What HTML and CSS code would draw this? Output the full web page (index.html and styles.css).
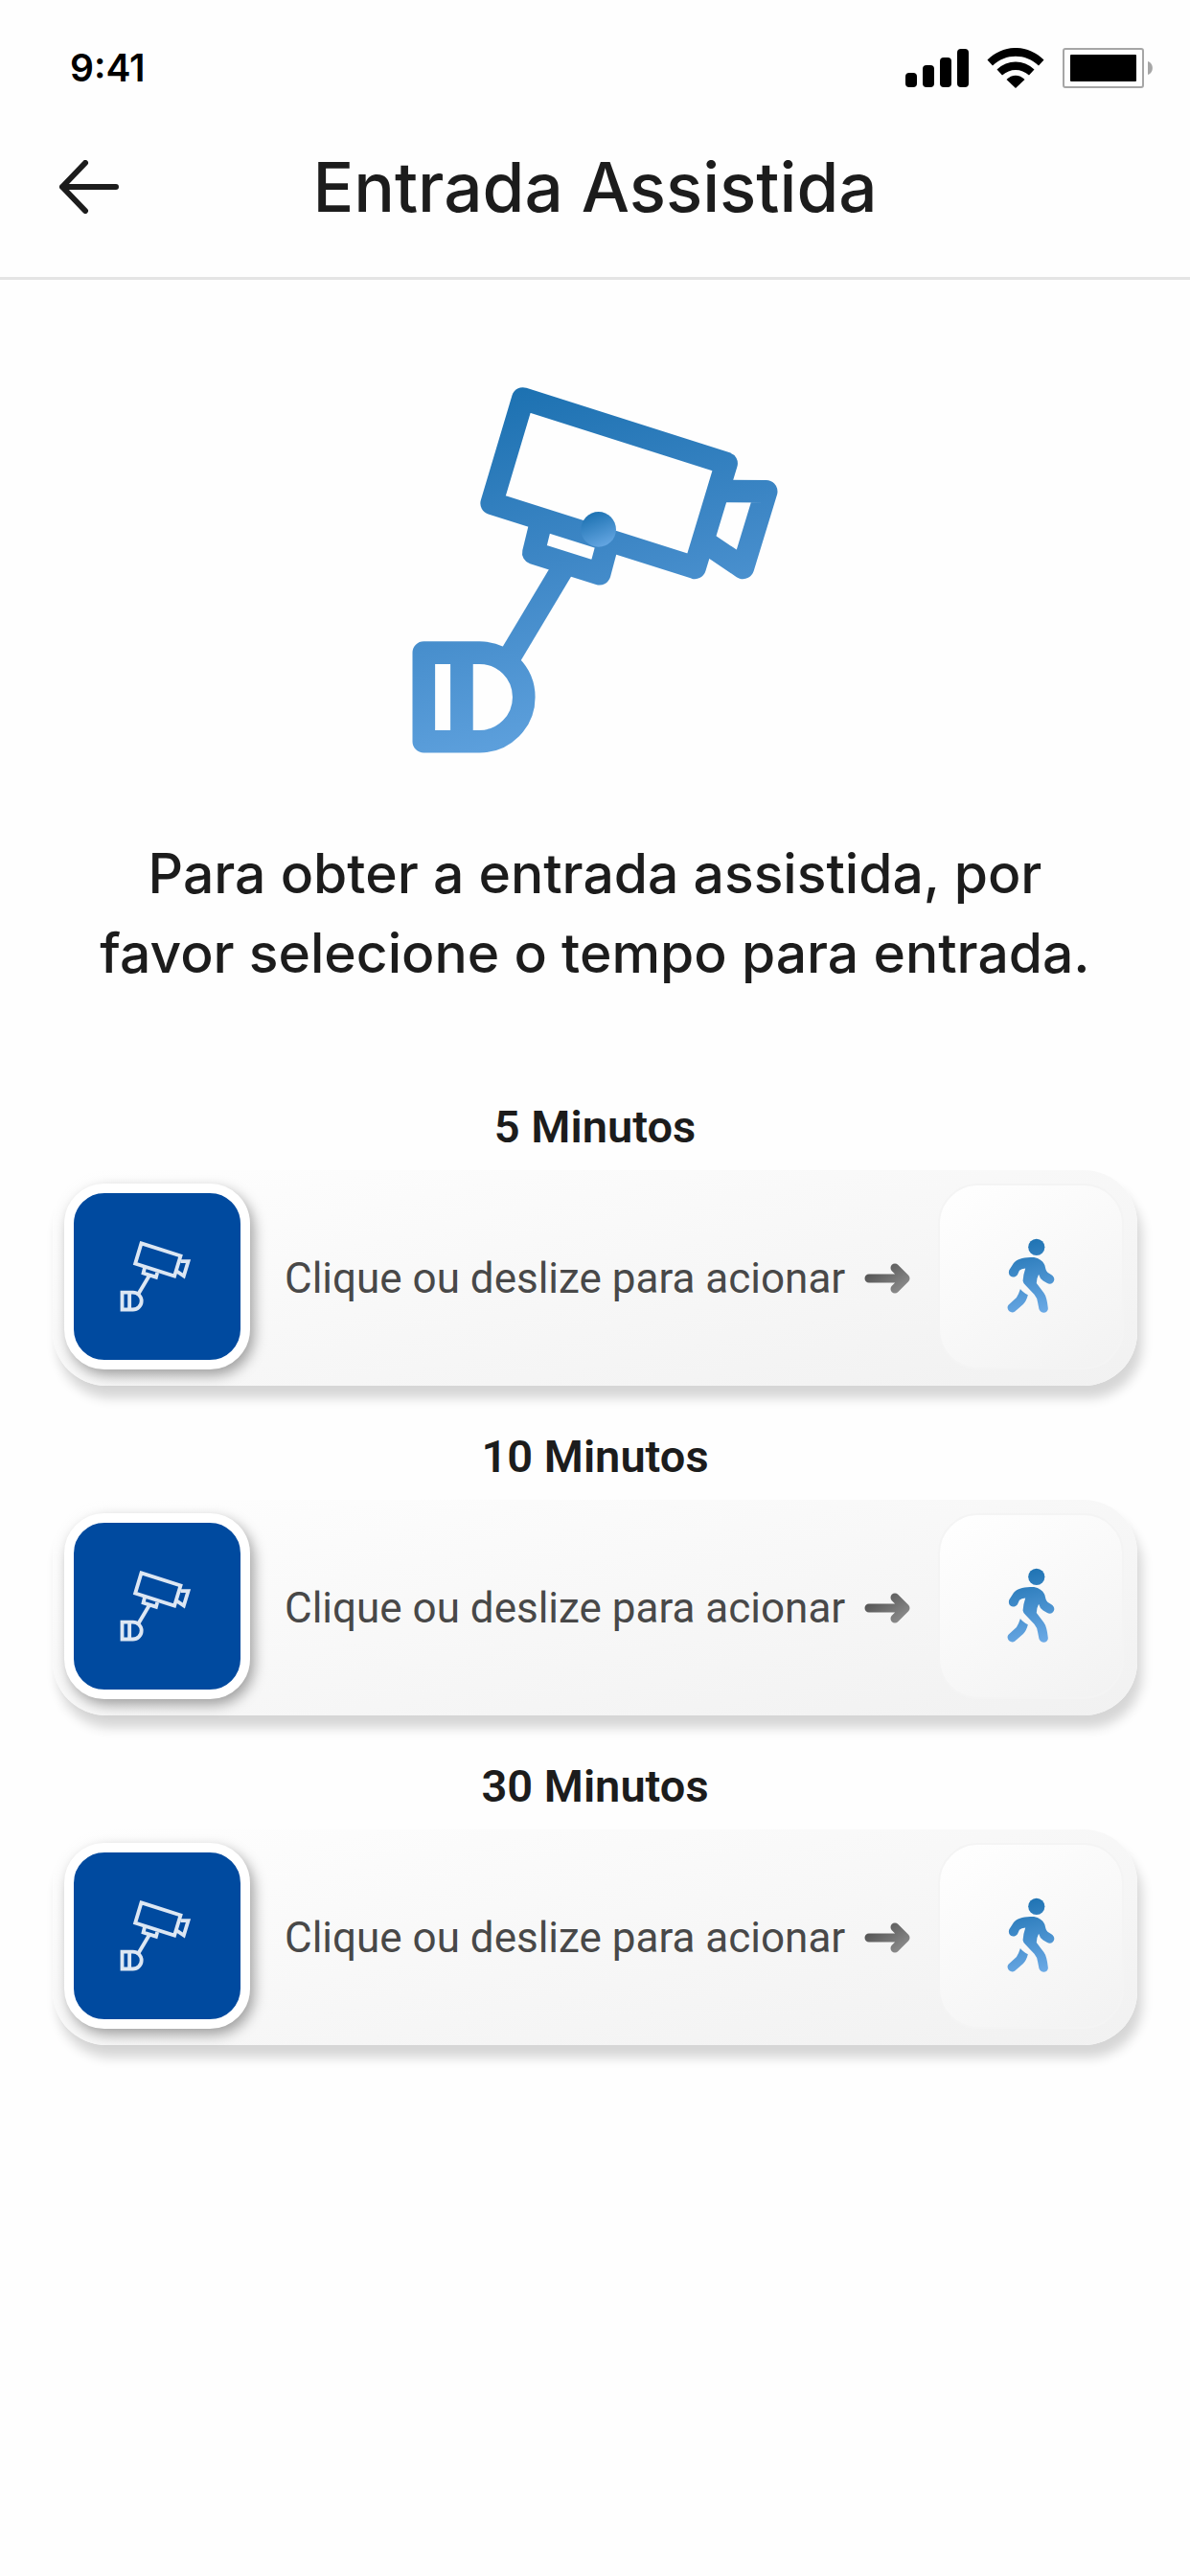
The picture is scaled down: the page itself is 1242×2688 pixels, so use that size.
FILE: index.html
```html
<!DOCTYPE html>
<html lang="pt-BR">
<head>
<meta charset="UTF-8">
<meta name="viewport" content="width=device-width, initial-scale=1.0">
<title>Entrada Assistida</title>
<link rel="stylesheet" href="styles.css">
</head>
<body>

<!-- Shared icons -->
<svg class="sprite" aria-hidden="true">
  <defs>
    <linearGradient id="blue" gradientUnits="userSpaceOnUse" x1="350" y1="70" x2="650" y2="1300">
      <stop offset="0" stop-color="#1c71b1"/>
      <stop offset="0.45" stop-color="#3e87c6"/>
      <stop offset="1" stop-color="#66a7e3"/>
    </linearGradient>
    <linearGradient id="blue-small" x1="0.3" y1="0" x2="0.7" y2="1">
      <stop offset="0" stop-color="#1c71b1"/>
      <stop offset="1" stop-color="#66a7e3"/>
    </linearGradient>
    <linearGradient id="walk-blue" gradientUnits="userSpaceOnUse" x1="140" y1="64" x2="200" y2="300">
      <stop offset="0" stop-color="#1c71b1"/>
      <stop offset="1" stop-color="#6caae6"/>
    </linearGradient>
    <linearGradient id="gray" gradientUnits="userSpaceOnUse" x1="12" y1="0" x2="36" y2="32">
      <stop offset="0" stop-color="#505050"/>
      <stop offset="1" stop-color="#8c8c8c"/>
    </linearGradient>
  </defs>
  <symbol id="camera" viewBox="60 68 1148 1152">
    <path d="M408 106L1046 309L947 636L310 434Z"/>
    <path d="M1046 396L1171 397L1098 636L975 553"/>
    <path d="M463 500L441 590L648 655L668 580"/>
    <path d="M536 633L362 924"/>
    <path d="M97 903H272A139 139 0 0 1 272 1181H97ZM216 903V1181"/>
  </symbol>
  <symbol id="arrow" viewBox="0 0 48 32">
    <path d="M5 16H42M32 5L43 16L32 27" fill="none" stroke="url(#gray)" stroke-width="9" stroke-linecap="round" stroke-linejoin="round"/>
  </symbol>
  <symbol id="walk" viewBox="92 64 151 236">
    <g fill="url(#walk-blue)">
      <circle cx="185" cy="91" r="26"/>
      <path d="M165 123C140 124 122 130 113 141L99 163C95 174 100 184 111 185C117 185 121 182 125 178L131 165Q137 159 150 158Q144 175 142 197Q143 204 150 211L178 240Q187 250 189 266L193 286C196 296 208 300 216 295C221 291 222 286 221 281C219 263 216 246 208 235L185 205Q185 190 192 177Q195 190 206 197L219 205C229 210 240 204 241 193C241 187 238 182 232 178L220 171Q215 165 214 160L211 148C207 136 196 130 188 126C181 123 173 123 165 123Z"/>
      <path d="M134 223Q140 232 158 242Q153 262 143 271L117 294C108 300 96 295 94 284C93 279 95 275 98 272L122 250Q128 242 134 223Z"/>
    </g>
  </symbol>
</svg>

<div class="status-bar">
  <span class="time">9:41</span>
  <div class="status-icons">
    <svg width="66" height="40" viewBox="0 0 66 40" aria-hidden="true">
      <rect x="0" y="25" width="12" height="15" rx="4"/>
      <rect x="18" y="17" width="12" height="23" rx="4"/>
      <rect x="36" y="9" width="12" height="31" rx="4"/>
      <rect x="54" y="0" width="12" height="40" rx="4"/>
    </svg>
    <svg width="60" height="42" viewBox="0 0 60 42" aria-hidden="true">
      <path d="M0.500 12.500C17-4.200 43-4.200 59.500 12.500L54 18.500C40.500 5.600 19.500 5.600 6 18.500Z"/>
      <path d="M10.500 22.500C21.500 11.800 38.500 11.800 49.500 22.500L44 28.500C36 21 24 21 16 28.500Z"/>
      <path d="M20.500 33C26 27.300 34 27.300 39.500 33L30 42Z"/>
    </svg>
    <svg width="94" height="42" viewBox="0 0 94 42" aria-hidden="true">
      <rect x="1" y="1" width="83" height="40" rx="2" fill="none" stroke="#a6a6a6" stroke-width="2"/>
      <rect x="8" y="7" width="69" height="28" rx="1"/>
      <path d="M89 14C95.500 16 95.500 26 89 28Z" fill="#a6a6a6"/>
    </svg>
  </div>
</div>

<header class="header">
  <button class="back-button" type="button" aria-label="Voltar">
    <svg width="62" height="56" viewBox="0 0 62 56" fill="none" stroke="#1c1c1c" stroke-width="6" stroke-linecap="round" stroke-linejoin="round" aria-hidden="true">
      <path d="M3 28H59M27 3L3 28L27 53"/>
    </svg>
  </button>
  <h1>Entrada Assistida</h1>
</header>

<main>
  <svg class="hero-icon" aria-hidden="true" viewBox="60 68 1148 1152">
    <use href="#camera" x="60" y="68" width="1148" height="1152"/>
    <circle cx="645" cy="516" r="55" fill="url(#blue-small)" stroke="none"/>
  </svg>

  <p class="description">Para obter a entrada assistida, por favor selecione o tempo para entrada.</p>

  <div class="options">
    <section class="option">
      <h2>5 Minutos</h2>
      <button class="slider" type="button">
        <span class="thumb"><svg class="camera-icon" aria-hidden="true"><use href="#camera"/></svg></span>
        <span class="slider-text">Clique ou deslize para acionar</span>
        <svg class="arrow-icon" aria-hidden="true"><use href="#arrow"/></svg>
        <span class="target"><svg class="walk-icon" aria-hidden="true"><use href="#walk"/></svg></span>
      </button>
    </section>

    <section class="option">
      <h2>10 Minutos</h2>
      <button class="slider" type="button">
        <span class="thumb"><svg class="camera-icon" aria-hidden="true"><use href="#camera"/></svg></span>
        <span class="slider-text">Clique ou deslize para acionar</span>
        <svg class="arrow-icon" aria-hidden="true"><use href="#arrow"/></svg>
        <span class="target"><svg class="walk-icon" aria-hidden="true"><use href="#walk"/></svg></span>
      </button>
    </section>

    <section class="option">
      <h2>30 Minutos</h2>
      <button class="slider" type="button">
        <span class="thumb"><svg class="camera-icon" aria-hidden="true"><use href="#camera"/></svg></span>
        <span class="slider-text">Clique ou deslize para acionar</span>
        <svg class="arrow-icon" aria-hidden="true"><use href="#arrow"/></svg>
        <span class="target"><svg class="walk-icon" aria-hidden="true"><use href="#walk"/></svg></span>
      </button>
    </section>
  </div>
</main>

</body>
</html>
```
FILE: styles.css
```css
/* General styles */
* {
  box-sizing: border-box;
}

body {
  margin: 0;
  font-family: Inter, "Liberation Sans", sans-serif;
  color: #1c1c1c;
  background-color: #fefefe;
}

svg {
  display: block;
  flex-shrink: 0;
}

button {
  border: none;
  padding: 0;
  font: inherit;
  color: inherit;
  background: none;
  cursor: pointer;
}

.sprite {
  position: absolute;
  width: 0;
  height: 0;
}

/* Status bar */
.status-bar {
  display: flex;
  justify-content: space-between;
  align-items: center;
  height: 92px;
  padding: 50px 39px 0 73px;
  color: #000;
}

.time {
  font-size: 39px;
  font-weight: 600;
  line-height: 42px;
}

.status-icons {
  display: flex;
  align-items: center;
  gap: 19px;
}

/* Header */
.header {
  display: grid;
  grid-template-columns: 62px 1fr 62px;
  align-items: center;
  padding: 61px 62px 52px;
  border-bottom: 3px solid #e4e4e4;
}

.header h1 {
  margin: 0;
  font-size: 71px;
  font-weight: 500;
  line-height: 84px;
  text-align: center;
}

/* Content */
main {
  padding: 111px 55px 60px;
}

.hero-icon {
  width: 382px;
  height: 384px;
  margin: 0 auto 83px;
  fill: none;
  stroke: url(#blue);
  stroke-width: 71;
  stroke-linejoin: round;
}

.description {
  max-width: 1050px;
  margin: 0 auto 112px;
  font-size: 57px;
  font-weight: 500;
  line-height: 83px;
  text-align: center;
}

.options {
  display: grid;
  gap: 46px;
  font-family: Roboto, "Liberation Sans", sans-serif;
}

.option h2 {
  margin: 0 0 17px;
  font-size: 47px;
  font-weight: 600;
  line-height: 56px;
  text-align: center;
}

/* Slide button */
.slider {
  display: flex;
  align-items: center;
  width: 100%;
  height: 225px;
  padding: 0 14px 0 12px;
  border-radius: 56px;
  background: linear-gradient(168deg, #fefefe, #f1f1f1);
  box-shadow: 5px 13px 12px rgba(0, 0, 0, 0.16);
}

.thumb,
.target {
  display: flex;
  justify-content: center;
  align-items: center;
  flex-shrink: 0;
  width: 194px;
  height: 194px;
  margin-bottom: 4px;
  border-radius: 42px;
}

.thumb {
  border: 10px solid #fff;
  background-color: #004a9f;
  box-shadow: 4px 6px 14px rgba(0, 0, 0, 0.36);
}

.camera-icon {
  width: 74px;
  height: 74px;
  margin-right: 4px;
  fill: none;
  stroke: #dde7f3;
  stroke-width: 60;
}

.slider-text {
  margin-left: 36px;
  font-size: 44px;
  font-weight: 400;
  color: #484848;
}

.arrow-icon {
  width: 48px;
  height: 32px;
  margin-left: 20px;
}

.target {
  margin-left: auto;
  border: 2px solid #f4f4f4;
  background: linear-gradient(150deg, #fff, #f2f2f2);
}

.walk-icon {
  width: 50px;
  height: 79px;
}
```
